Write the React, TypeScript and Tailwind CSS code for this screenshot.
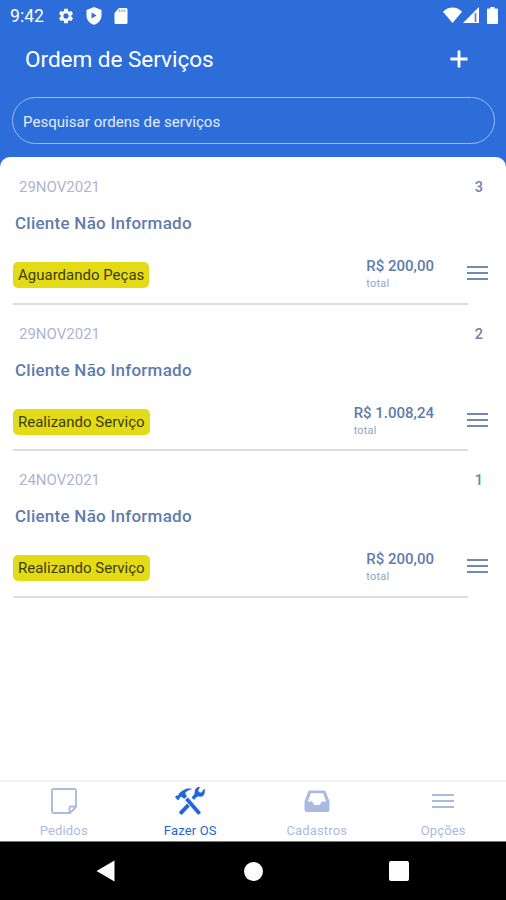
import { MdSettings } from "react-icons/md";

const orders = [
    { date: "29NOV2021", number: 3, client: "Cliente Não Informado", status: "Aguardando Peças", total: "R$ 200,00" },
    { date: "29NOV2021", number: 2, client: "Cliente Não Informado", status: "Realizando Serviço", total: "R$ 1.008,24" },
    { date: "24NOV2021", number: 1, client: "Cliente Não Informado", status: "Realizando Serviço", total: "R$ 200,00" },
];

const tabs = [
    { label: "Pedidos", icon: NoteIcon, active: false },
    { label: "Fazer OS", icon: ToolsIcon, active: true },
    { label: "Cadastros", icon: InboxIcon, active: false },
    { label: "Opções", icon: OptionsIcon, active: false },
];

export default function App() {
    return (
        <main className="flex h-[900px] w-full flex-col overflow-hidden bg-[#2d6dda] font-['Roboto',sans-serif]">
            <StatusBar />

            <header className="flex h-[65px] shrink-0 items-start justify-between pl-[25px] pr-[38px] pt-[13px] text-white">
                <h1 className="text-[22.6px] leading-[30px] tracking-[-0.05px]">Ordem de Serviços</h1>
                <button aria-label="Adicionar" className="mt-[5px]">
                    <svg width="18" height="18" viewBox="0 0 18 18" fill="none" stroke="currentColor" strokeWidth="2.8">
                        <path d="M9 .5v17M.5 9h17" />
                    </svg>
                </button>
            </header>

            <div className="h-[60px] shrink-0 pl-3 pr-[11px]">
                <input
                    type="text"
                    placeholder="Pesquisar ordens de serviços"
                    className="h-[47px] w-full rounded-full border border-[#9dbbf2] bg-transparent px-[10px] pt-[2px] text-[15.1px] text-white outline-none placeholder:text-[#e3ecfd] placeholder:opacity-100"
                />
            </div>

            <section className="min-h-0 flex-1 rounded-t-[10px] bg-white pt-px">
                {orders.map((order) => (
                    <OrderCard key={order.number} {...order} />
                ))}
            </section>

            <nav className="flex h-[61px] shrink-0 border-t-2 border-[#f1f1f2] bg-white">
                {tabs.map(({ label, icon: Icon, active }) => (
                    <button
                        key={label}
                        className={`flex flex-1 flex-col items-center pl-px pt-[5px] ${active ? "text-[#2166d9]" : "text-[#a9bbdf]"}`}
                    >
                        <Icon />
                        <span className="mt-[7px] text-[13px] leading-[18px] tracking-[0.15px]">{label}</span>
                    </button>
                ))}
            </nav>

            <SystemBar />
        </main>
    );
}

function OrderCard({ date, number, client, status, total }: (typeof orders)[number]) {
    return (
        <article className="flex h-[146.7px] flex-col">
            <div className="flex items-center justify-between pl-[19px] pr-[23px] pt-[19px] leading-[20px]">
                <span className="text-[15px] text-[#adb5d1]">{date}</span>
                <span className="pt-px text-[14.5px] font-medium leading-[19px] text-[#6f82ac]">{number}</span>
            </div>
            <h2 className="mt-[14px] pl-[15px] text-[17px] font-medium leading-[24px] tracking-[0.25px] text-[#5f7cac]">{client}</h2>
            <div className="mt-[20px] flex items-start justify-between pl-[13px] pr-[18px]">
                <span className="mt-[7px] h-[26px] rounded-[5px] bg-[#e4db17] px-[5px] text-[15px] leading-[26px] text-[#3e3c0d]">{status}</span>
                <div className="flex">
                    <div className="mr-[33px] mt-px flex flex-col">
                        <span className="text-[15px] font-medium leading-[20px] text-[#5f7cac]">{total}</span>
                        <span className="mt-px text-[11px] leading-[14px] tracking-[0.2px] text-[#93a4c9]">total</span>
                    </div>
                    <svg className="mt-[10px]" width="21" height="16" viewBox="0 0 21 16" stroke="#7389b3" strokeWidth="2.2">
                        <path d="M0 2h21M0 8h21M0 14h21" />
                    </svg>
                </div>
            </div>
            <hr className="ml-[13px] mr-[38px] mt-auto border-t-2 border-[#dddddf]" />
        </article>
    );
}

function StatusBar() {
    return (
        <div className="flex h-8 shrink-0 items-center justify-between pl-[10px] pr-[8px] text-white">
            <div className="flex items-center">
                <span className="w-[47px] text-[17.6px]">9:42</span>
                <MdSettings className="h-[18px] w-[18px]" />
                <svg className="ml-[11px]" width="16" height="18" viewBox="0 0 16 18" fill="currentColor">
                    <path fillRule="evenodd" d="M8 0l7.5 3v5.4c0 4.4-3.1 8-7.5 9.3C3.6 16.4.5 12.8.5 8.4V3zM5.6 5.6v6l5-3z" />
                </svg>
                <svg className="ml-[12px]" width="14" height="16" viewBox="0 0 14 16">
                    <path fill="currentColor" d="M5 0h7a1.5 1.5 0 0 1 1.5 1.5v13A1.5 1.5 0 0 1 12 16H2A1.5 1.5 0 0 1 .5 14.5V5z" />
                    <path stroke="#8fb2ee" strokeWidth="1.5" d="M5.5 4V1.5M8 4V1.5M10.5 4V1.5" />
                </svg>
            </div>
            <div className="mb-[2px] flex items-center">
                <svg width="19" height="16" viewBox="0 0 19 16" fill="currentColor">
                    <path d="M0 4.8C5-1 14-1 19 4.8L9.5 16z" />
                </svg>
                <svg className="ml-[1px]" width="16" height="16" viewBox="0 0 16 16">
                    <path fill="currentColor" d="M0 16L16 0v16z" />
                    <path stroke="#5386e1" strokeWidth="1.8" d="M12.5 6v9" />
                </svg>
                <svg className="ml-[8px]" width="11" height="17" viewBox="0 0 11 17" fill="currentColor">
                    <path d="M3.5 0h4v1.5H10a1 1 0 0 1 1 1V16a1 1 0 0 1-1 1H1a1 1 0 0 1-1-1V2.5a1 1 0 0 1 1-1h2.5z" />
                </svg>
            </div>
        </div>
    );
}

function SystemBar() {
    return (
        <div className="flex h-[59px] shrink-0 items-center justify-between border-t border-[#777] bg-black pl-[96px] pr-[97px] text-white">
            <svg width="19" height="22" viewBox="0 0 19 22" fill="currentColor">
                <path d="M18.5.5v21L.5 11z" />
            </svg>
            <span className="ml-[2px] h-[19px] w-[19px] rounded-full bg-white" />
            <span className="h-[20px] w-[20px] rounded-[2px] bg-white" />
        </div>
    );
}

function NoteIcon() {
    return (
        <svg width="28" height="28" viewBox="0 0 28 28" fill="none" stroke="currentColor" strokeWidth="1.9" strokeLinejoin="round">
            <path d="M3.5 2h21A1.5 1.5 0 0 1 26 3.5V20l-6 6H3.5A1.5 1.5 0 0 1 2 24.5v-21A1.5 1.5 0 0 1 3.5 2zM26 19.500h-5A1.5 1.5 0 0 0 19.500 21v5" />
        </svg>
    );
}

function ToolsIcon() {
    return (
        <svg width="30" height="28" viewBox="0 0 20 19" fill="currentColor" stroke="currentColor" strokeWidth=".25">
            <path d="M3.135 6.89c.933-.725 1.707-.225 2.74.971.116.135.272-.023.361-.1.088-.078 1.451-1.305 1.518-1.361.066-.059.146-.169.041-.292a36.238 36.238 0 0 1-.743-.951c-1.808-2.365 4.946-3.969 3.909-3.994-.528-.014-2.646-.039-2.963-.004-1.283.135-2.894 1.334-3.705 1.893-1.061.726-1.457 1.152-1.522 1.211-.3.262-.048.867-.592 1.344-.575.503-.934.122-1.267.414-.165.146-.627.492-.759.607-.133.117-.157.314-.021.471 0 0 1.264 1.396 1.37 1.52.105.122.391.228.567.071.177-.156.632-.553.708-.623.078-.066-.05-.861.358-1.177z" />
            <path d="M8.843 7.407c-.12-.139-.269-.143-.397-.029L7.012 8.63a.289.289 0 0 0-.027.4l8.294 9.439c.194.223.53.246.751.053l.97-.813a.538.538 0 0 0 .052-.75z" />
            <path d="M19.894 1.707c-.076-.504-.338-.399-.475-.189-.139.213-.756 1.159-1.01 1.579-.252.418-.873 1.241-2.021.424-1.196-.848-.78-1.437-.572-1.832.21-.396.854-1.506.947-1.646.093-.143-.016-.552-.384-.382s-2.604 1.061-2.914 2.332c-.316 1.293.26 2.449-.875 3.588l-1.377 1.443 1.383 1.611 1.697-1.611c.404-.404 1.266-.81 2.047-.631 1.673.383 2.586-.246 3.119-1.23.477-.883.523-3.041.435-3.456z" />
            <path d="M8.1 11.4l1.6 1.85-5 5.2a.7.7 0 0 1-1 0l-.75-.8a.7.7 0 0 1 0-1z" />
        </svg>
    );
}

function InboxIcon() {
    return (
        <svg width="28" height="28" viewBox="0 0 28 28" fill="currentColor">
            <path fillRule="evenodd" d="M7 3.5h14a2 2 0 0 1 1.9 1.3l3.6 9.7V23a2 2 0 0 1-2 2h-21a2 2 0 0 1-2-2v-8.5l3.6-9.7A2 2 0 0 1 7 3.5zm.9 2.7l-3.1 8.3h4.4l2 3.500h5.6l2-3.500h4.400l-3.100-8.300z" />
        </svg>
    );
}

function OptionsIcon() {
    return (
        <svg width="28" height="28" viewBox="0 0 28 28" fill="none" stroke="currentColor" strokeWidth="1.8">
            <path d="M3 8h22M3 14h22M3 20h22" />
        </svg>
    );
}
